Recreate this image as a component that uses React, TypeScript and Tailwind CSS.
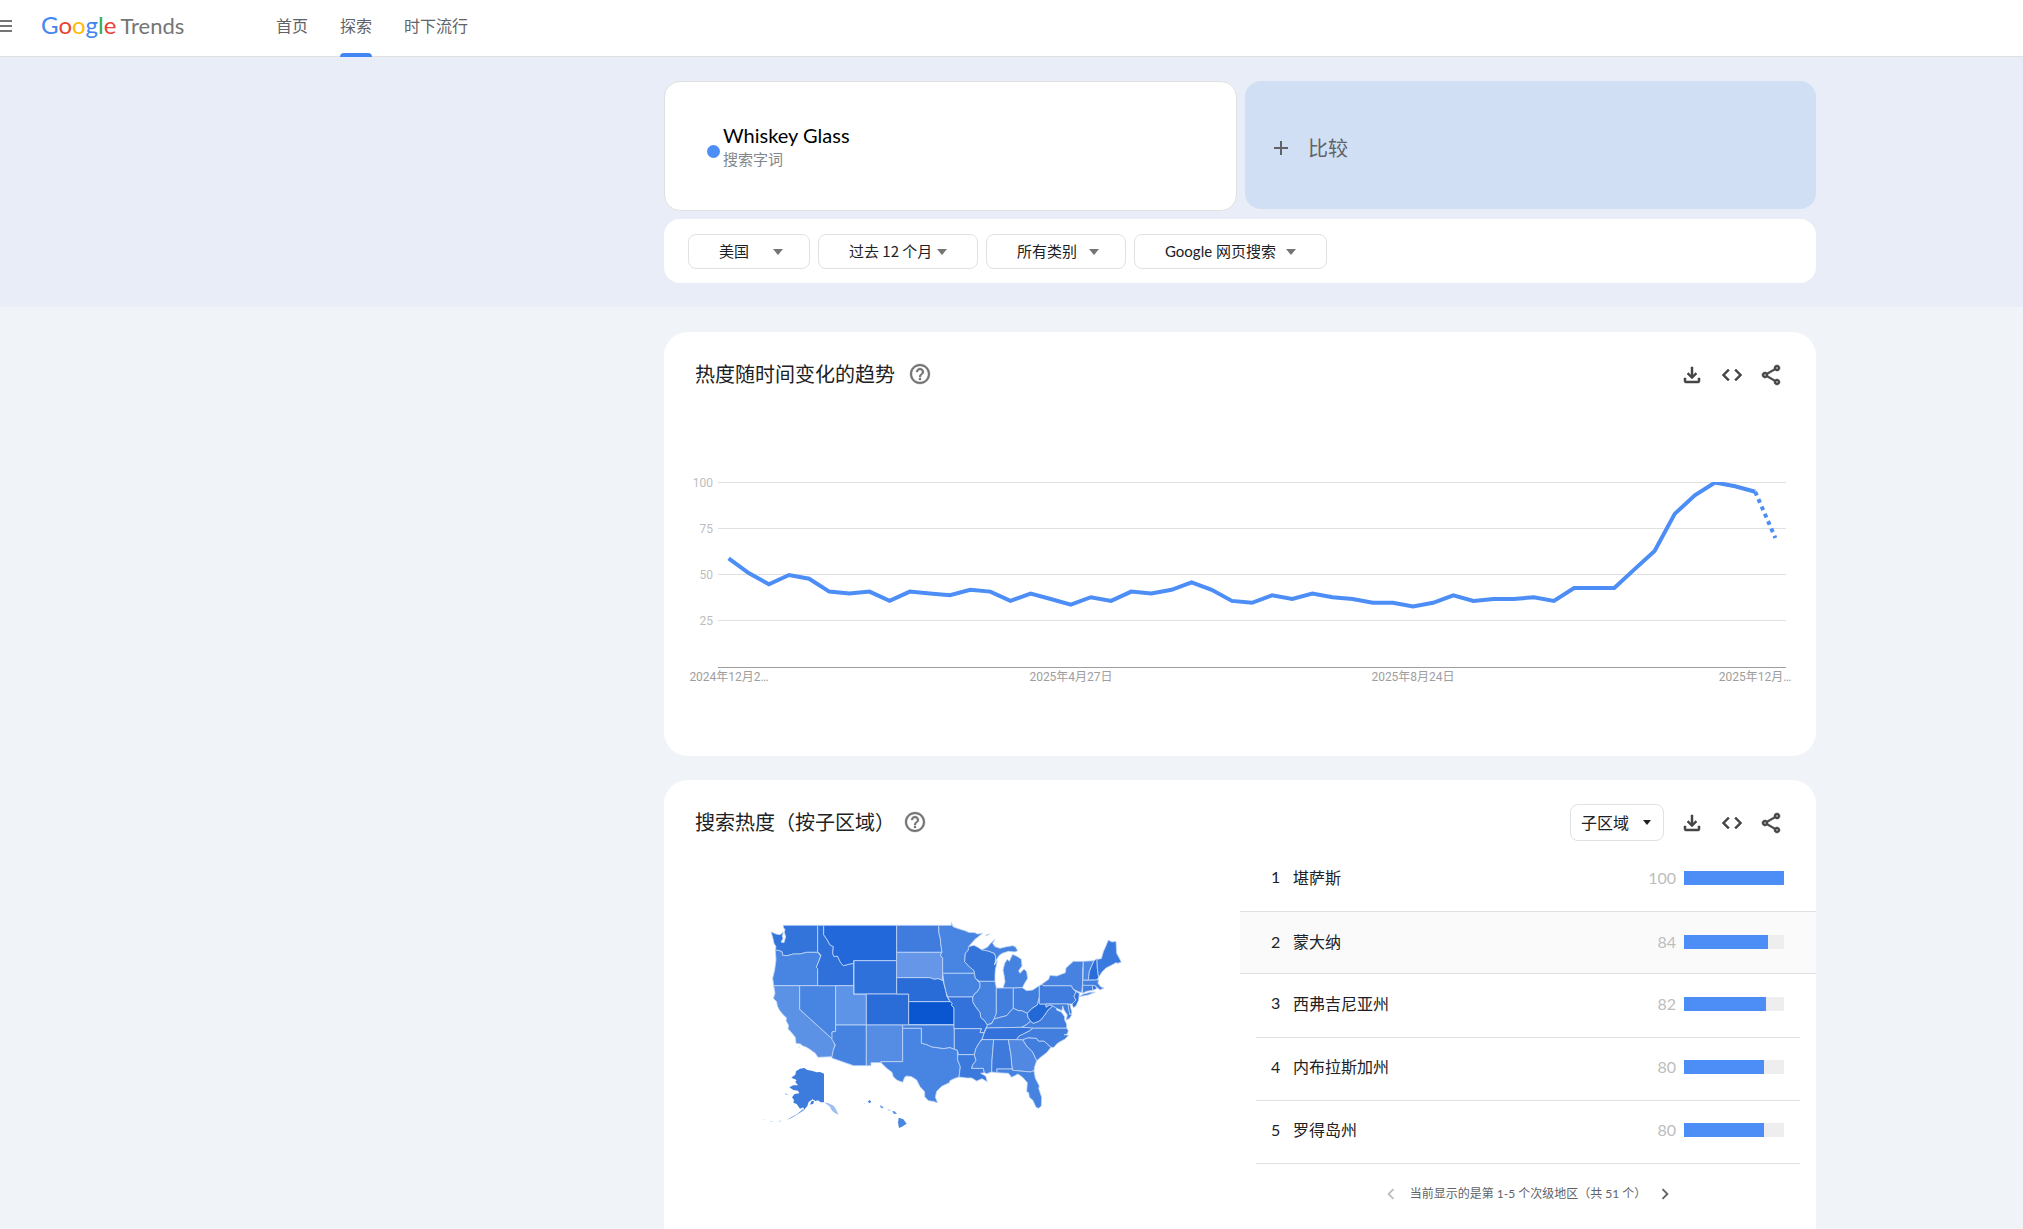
import React from "react";

const LATIN = "font-[Lato,'Noto_Sans_CJK_SC',sans-serif]";

type Shape = { id: string; fill: string; d: string };

const STATES: Shape[] = [
  { id: "WA", fill: "#3374da", d: "63,95 78,102 90,104 100,97 97,108 99,116 93,126 102,128 107,110 103,97 105,89 100,82 100,76 203,76 203,157 170,157 150,162 130,162 112,167 98,166 96,155 85,151 76,151 78,140 72,130 68,112" },
  { id: "OR", fill: "#4884e1", d: "76,151 85,151 96,155 98,166 112,167 130,162 150,162 170,157 203,157 212,168 206,185 199,202 203,206 203,257 71,257 68,235 74,210 78,180" },
  { id: "CA", fill: "#5c92e6", d: "71,257 149,257 149,328 248,418 255,435 250,450 247,470 204,472 196,460 178,447 166,440 158,438 152,432 138,430 136,412 128,402 114,386 116,376 108,362 110,354 100,345 88,330 82,318 80,305 70,295 75,280 73,268" },
  { id: "NV", fill: "#4884e1", d: "149,257 257,257 257,394 246,396 248,418 149,328" },
  { id: "ID", fill: "#2f70da", d: "203,76 221,76 221,104 232,120 240,135 250,140 248,160 252,170 262,168 272,188 280,197 300,192 311,190 311,257 203,257 203,206 199,202 206,185 213,166 203,155" },
  { id: "MT", fill: "#2268da", d: "221,76 440,76 440,182 311,182 311,190 300,192 280,197 272,188 262,168 252,170 248,160 250,140 240,135 232,120 221,104" },
  { id: "WY", fill: "#2f71da", d: "312,182 440,182 440,282 312,282" },
  { id: "UT", fill: "#5e94e7", d: "257,257 311,257 311,283 349,283 349,375 257,375" },
  { id: "CO", fill: "#2b6dd8", d: "349,282 476,282 476,375 349,375" },
  { id: "AZ", fill: "#4682e0", d: "257,375 349,375 349,497 311,497 245,474 250,450 256,435 246,418 246,396 257,394" },
  { id: "NM", fill: "#558de4", d: "349,375 458,375 458,485 393,485 396,488 363,488 363,497 349,497" },
  { id: "ND", fill: "#3f7cde", d: "440,76 566,76 567,100 571,115 572,130 576,157 440,157" },
  { id: "SD", fill: "#6696e8", d: "440,157 576,157 571,165 578,175 578,220 577,232 579,242 565,236 552,238 540,233 440,233" },
  { id: "NE", fill: "#296cd8", d: "440,233 540,233 552,238 565,236 579,242 584,260 588,275 590,288 600,305 476,305 476,282 440,282" },
  { id: "KS", fill: "#0a55d0", d: "476,305 601,305 607,310 604,315 612,324 612,374 476,374" },
  { id: "OK", fill: "#4480df", d: "458,375 612,375 613,402 613,448 600,443 580,446 560,443 545,441 530,434 514,430 514,385 458,385" },
  { id: "TX", fill: "#4884e1", d: "458,385 514,385 514,430 530,434 545,441 560,443 580,446 600,443 613,448 622,450 623,480 631,500 627,531 612,536 600,542 598,548 575,559 560,574 556,592 563,608 548,604 535,602 524,590 524,575 510,560 500,540 485,530 470,528 464,532 458,547 440,540 430,530 426,517 410,505 395,490 393,485 458,485" },
  { id: "MN", fill: "#4884e1", d: "566,76 604,76 604,67 609,80 625,86 648,93 655,97 675,98 682,102 698,100 675,118 658,137 655,150 646,160 644,185 658,200 672,212 674,220 578,220 578,175 571,165 576,157 572,130 571,115 567,100" },
  { id: "IA", fill: "#4682e0", d: "578,220 674,220 676,235 690,250 690,262 682,275 673,282 668,291 593,291 588,275 582,250" },
  { id: "WI", fill: "#3575da", d: "655,140 672,136 682,141 695,149 715,153 733,160 737,170 736,184 733,195 742,182 736,210 735,225 735,244 688,244 676,235 672,212 658,200 644,185 646,160 655,150" },
  { id: "MIU", fill: "#4682e0", d: "695,149 712,142 722,130 735,118 728,130 735,140 750,145 770,140 788,137 796,140 803,152 795,156 775,154 757,160 748,166 742,175 737,184 737,170 733,160 715,153" },
  { id: "MI", fill: "#4682e0", d: "759,264 765,245 762,225 759,210 764,190 772,178 778,184 782,175 788,163 803,170 814,178 816,198 806,212 810,220 822,207 830,215 833,235 825,248 817,263 790,264" },
  { id: "IL", fill: "#4682e0", d: "688,244 735,244 739,264 739,340 733,357 725,370 710,375 706,365 692,352 690,338 675,318 668,305 668,291 673,282 682,275 690,262 690,250" },
  { id: "IN", fill: "#427ede", d: "739,264 790,264 790,325 780,335 770,347 750,352 732,357 739,340" },
  { id: "OH", fill: "#427ede", d: "790,264 817,263 830,272 848,270 868,257 868,290 862,315 845,326 832,340 815,332 805,332 790,325" },
  { id: "KY", fill: "#427ede", d: "709,384 712,374 725,371 732,357 750,352 770,347 780,335 790,325 805,332 815,332 832,340 834,352 842,364 828,375 815,382" },
  { id: "TN", fill: "#3272da", d: "696,419 700,405 709,384 815,382 850,383 838,393 820,402 806,409 800,419" },
  { id: "MO", fill: "#3272da", d: "593,291 668,291 668,305 675,318 690,338 692,352 706,365 712,376 706,387 702,398 690,398 694,386 612,386 612,324 604,315 607,310 601,305" },
  { id: "AR", fill: "#3b79dc", d: "613,386 694,386 690,398 702,398 697,415 688,428 678,445 673,464 625,464 622,450 613,448" },
  { id: "LA", fill: "#3b79dc", d: "623,464 673,464 678,482 668,495 665,505 700,505 703,518 692,520 707,528 712,545 696,536 680,543 665,534 650,534 627,531 631,500 623,480" },
  { id: "MS", fill: "#4682e0", d: "696,419 731,419 726,480 725,516 710,521 703,518 700,505 665,505 668,495 678,482 673,464 678,445 688,428" },
  { id: "AL", fill: "#3d7adc", d: "731,419 775,419 783,465 785,490 787,507 740,507 742,518 725,516 726,480" },
  { id: "GA", fill: "#5088e2", d: "775,419 818,419 830,438 848,456 860,482 854,500 852,512 842,516 788,511 785,490 783,465" },
  { id: "FL", fill: "#4682e0", d: "740,507 787,507 788,511 842,516 852,512 856,535 868,558 866,565 875,592 874,618 866,625 858,622 848,600 838,592 836,578 830,575 832,548 818,532 804,522 785,532 775,520 742,518" },
  { id: "SC", fill: "#427ede", d: "818,419 834,413 860,415 865,423 882,423 903,442 890,458 874,470 860,482 848,456 830,438" },
  { id: "NC", fill: "#427ede", d: "800,419 806,409 820,402 838,393 850,384 950,384 955,392 952,402 942,404 956,406 944,418 930,425 920,432 912,442 903,442 882,423 865,423 860,415 834,413 818,419" },
  { id: "VA", fill: "#427ede", d: "815,382 828,375 842,364 850,370 866,364 874,358 884,345 894,330 908,318 920,320 920,330 934,336 944,350 944,360 950,372 950,384 850,384" },
  { id: "WV", fill: "#2268d6", d: "832,340 845,326 862,315 868,295 870,312 888,312 888,322 900,314 908,318 894,330 884,345 874,358 866,364 850,370 842,364 834,352" },
  { id: "PA", fill: "#3f7cdd", d: "868,258 876,252 880,257 964,257 970,268 978,275 972,290 978,300 966,312 868,312" },
  { id: "NY", fill: "#4882e1", d: "876,252 896,238 900,226 920,228 936,222 946,218 948,204 970,184 1000,184 998,215 998,250 995,278 985,275 970,268 964,257 880,257" },
  { id: "LI", fill: "#4882e1", d: "987,290 1000,282 1022,277 1036,276 1015,285" },
  { id: "NJ", fill: "#3272da", d: "970,268 978,275 988,280 986,300 978,318 970,323 966,312 978,300 972,290 978,275" },
  { id: "MD", fill: "#427ede", d: "888,312 954,312 960,343 966,344 958,356 948,360 952,345 942,330 938,318 936,332 920,325 908,318 900,314 888,320" },
  { id: "DE", fill: "#3272da", d: "954,312 960,314 966,340 959,343" },
  { id: "VT", fill: "#4a86e2", d: "1000,184 1032,182 1024,200 1018,215 1015,240 999,241" },
  { id: "NH", fill: "#2b6dd8", d: "1032,182 1041,176 1042,205 1046,232 1040,240 1015,240 1018,215 1024,200" },
  { id: "ME", fill: "#3a79de", d: "1041,178 1054,176 1060,155 1066,142 1075,120 1086,126 1098,124 1100,160 1114,186 1104,190 1098,188 1080,198 1068,204 1056,216 1046,232 1042,205" },
  { id: "MA", fill: "#4480df", d: "998,241 1040,240 1046,238 1044,250 1052,260 1062,264 1050,270 1036,258 998,256" },
  { id: "CT", fill: "#427ede", d: "998,256 1028,256 1028,271 1010,274 998,280" },
  { id: "RI", fill: "#2b6dd8", d: "1028,256 1036,257 1040,266 1028,271" },
];

const ISLANDS: Shape[] = [
  { id: "AK", fill: "#3d7bdc", d: "163,504 172,510 185,512 200,517 210,516 222,521 222,607 212,607 204,601 196,603 188,598 176,606 172,618 162,630 160,622 150,626 140,612 130,608 132,600 126,592 134,582 148,580 144,572 130,570 118,562 130,556 144,556 136,546 140,540 124,533 136,524 138,514 150,506" },
  { id: "AKP", fill: "#5c92e6", d: "162,630 150,638 138,646 124,654 110,660 126,650 142,642 158,628" },
  { id: "AKK", fill: "#3d7bdc", d: "184,604 192,602 190,611 180,614" },
  { id: "AKA", fill: "#9dbff1", d: "103,580 116,583 108,585" },
  { id: "AKS", fill: "#9dbff1", d: "222,607 236,610 252,618 260,632 266,644 256,640 246,632 240,620" },
  { id: "AL1", fill: "#b7cff4", d: "82,664 96,661 90,665" },
  { id: "AL2", fill: "#b7cff4", d: "58,662 70,666 62,666" },
  { id: "AL3", fill: "#b7cff4", d: "41,657 46,660 42,661" },
  { id: "HI1", fill: "#4a86e2", d: "353,605 359,600 364,605 359,610" },
  { id: "HI0", fill: "#b7cff4", d: "341,611 345,608 344,613" },
  { id: "HI2", fill: "#6c9cea", d: "389,616 396,618 402,625 393,624" },
  { id: "HI3", fill: "#9dbff1", d: "412,628 424,630 416,632" },
  { id: "HI4", fill: "#5c92e6", d: "426,634 434,634 441,641 432,642" },
  { id: "HI5", fill: "#4a86e2", d: "446,653 460,658 470,671 456,680 447,684 444,668" },
  { id: "CI", fill: "#b7cff4", d: "145,439 150,441 147,443" },
  { id: "IR", fill: "#9dbff1", d: "704,106 722,100 712,107" },
];

const SERIES = [
  59, 51, 45, 50, 48, 41, 40, 41, 36, 41, 40, 39, 42, 41, 36, 40, 37, 34, 38, 36, 41, 40, 42, 46, 42, 36, 35, 39, 37,
  40, 38, 37, 35, 35, 33, 35, 39, 36, 37, 37, 38, 36, 43, 43, 43, 53, 63, 83, 93, 100, 98, 95, 70,
];

const px = (i: number) => 44.6 + i * 20.13;
const py = (v: number) => 195.5 - v * 1.85;
const toPoints = (from: number, to: number) =>
  SERIES.slice(from, to)
    .map((v, i) => `${px(from + i).toFixed(1)},${py(v).toFixed(1)}`)
    .join(" ");

const PLAIN_ROW = "border-b border-[#e0e0e0] pb-1";

const REGIONS = [
  { rank: 1, name: "堪萨斯", value: 100, row: `h-16 ${PLAIN_ROW}` },
  { rank: 2, name: "蒙大纳", value: 84, row: "h-[61px] pb-px" },
  { rank: 3, name: "西弗吉尼亚州", value: 82, row: `h-16 ${PLAIN_ROW}` },
  { rank: 4, name: "内布拉斯加州", value: 80, row: `h-[63px] ${PLAIN_ROW}` },
  { rank: 5, name: "罗得岛州", value: 80, row: `h-[63px] ${PLAIN_ROW}` },
];

function Icon({ d, className = "size-6" }: { d: string; className?: string }) {
  return (
    <svg viewBox="0 0 24 24" className={className} fill="currentColor" aria-hidden="true">
      <path d={d} />
    </svg>
  );
}

const HELP =
  "M11 18h2v-2h-2v2zm1-16C6.48 2 2 6.48 2 12s4.48 10 10 10 10-4.48 10-10S17.52 2 12 2zm0 18c-4.41 0-8-3.59-8-8s3.59-8 8-8 8 3.59 8 8-3.59 8-8 8zm0-14c-2.21 0-4 1.79-4 4h2c0-1.1.9-2 2-2s2 .9 2 2c0 2-3 1.75-3 5h2c0-2.25 3-2.5 3-5 0-2.21-1.79-4-4-4z";
const DOWNLOAD =
  "M12 16l-5-5 1.4-1.45 2.6 2.6V4h2v8.15l2.6-2.6L17 11zM6 20c-.55 0-1.02-.2-1.41-.59C4.2 19.02 4 18.55 4 18v-3h2v3h12v-3h2v3c0 .55-.2 1.02-.59 1.41-.39.39-.86.59-1.41.59z";
const CODE =
  "M8 18l-6-6 6-6 1.43 1.43L4.83 12.03l4.58 4.57zm8 0l-1.43-1.43 4.6-4.6-4.58-4.57L16 6l6 6z";
const SHARE =
  "M17 22c-.83 0-1.54-.29-2.13-.88A2.89 2.89 0 0 1 14 19c0-.1.03-.33.08-.7l-7.03-4.1c-.26.25-.57.45-.92.59-.35.14-.73.21-1.13.21-.83 0-1.54-.29-2.13-.88A2.89 2.89 0 0 1 2 12c0-.83.29-1.54.87-2.13A2.89 2.89 0 0 1 5 9c.4 0 .78.07 1.13.21.35.14.66.34.92.59l7.03-4.1a1.84 1.84 0 0 1-.06-.34C14.01 5.25 14 5.13 14 5c0-.83.29-1.54.87-2.13A2.89 2.89 0 0 1 17 2c.83 0 1.54.29 2.13.87.58.59.87 1.3.87 2.13s-.29 1.54-.87 2.13A2.89 2.89 0 0 1 17 8c-.4 0-.78-.07-1.13-.21-.35-.14-.66-.34-.92-.59l-7.03 4.1c.03.12.06.23.06.34.01.11.02.23.02.36s-.01.25-.02.36c0 .11-.03.22-.06.34l7.03 4.1c.26-.25.57-.45.92-.59.35-.14.73-.21 1.13-.21.83 0 1.54.29 2.13.88.58.58.87 1.29.87 2.12s-.29 1.54-.87 2.12c-.59.59-1.3.88-2.13.88zm0-2a1 1 0 1 0 0-2 1 1 0 0 0 0 2zM5 13a1 1 0 1 0 0-2 1 1 0 0 0 0 2zm12-7a1 1 0 1 0 0-2 1 1 0 0 0 0 2z";

const BOLD_ICON = "size-6 stroke-current stroke-[0.5]";

function CardActions() {
  return (
    <div className="flex gap-4 pt-px text-[#444746]">
      <button type="button" aria-label="下载">
        <Icon d={DOWNLOAD} className={BOLD_ICON} />
      </button>
      <button type="button" aria-label="嵌入">
        <Icon d={CODE} className={BOLD_ICON} />
      </button>
      <button type="button" aria-label="分享">
        <Icon d={SHARE} className={BOLD_ICON} />
      </button>
    </div>
  );
}

function CardTitle({ children, gap }: { children: React.ReactNode; gap: string }) {
  return (
    <div className={`flex items-center pb-px ${gap}`}>
      <h2 className="text-xl leading-6 text-[#202124]">{children}</h2>
      <button type="button" aria-label="帮助" className="text-[#757575]">
        <Icon d={HELP} className="size-6 stroke-current stroke-[0.3]" />
      </button>
    </div>
  );
}

function Dropdown({ label, value, width, arrow, font = "" }: { label: string; value: string; width: string; arrow: string; font?: string }) {
  return (
    <div className={`relative ${width}`}>
      <select
        aria-label={label}
        className={`block h-[35px] w-full appearance-none rounded-lg border border-[#dfe1e5] bg-white pl-[30px] text-[15px] text-[#202124] ${font}`}
      >
        <option>{value}</option>
      </select>
      <span
        className={`pointer-events-none absolute top-[15px] border-x-[5px] border-t-[6px] border-x-transparent border-t-[#757575] ${arrow}`}
      />
    </div>
  );
}

function TrendChart() {
  return (
    <svg viewBox="0 0 1112 220" className="w-full font-[Roboto,'Noto_Sans_CJK_SC',sans-serif] text-xs" role="img" aria-label="热度随时间变化的趋势">
      {[100, 75, 50, 25].map((v) => (
        <g key={v}>
          <line x1="34" x2="1102" y1={Math.round(py(v)) - 0.5} y2={Math.round(py(v)) - 0.5} stroke="#e0e0e0" />
          <text x="29" y={Math.round(py(v)) + 4} textAnchor="end" fill="#bdbdbd">
            {v}
          </text>
        </g>
      ))}
      <line x1="34" x2="1102" y1="195.5" y2="195.5" stroke="#9e9e9e" />
      <clipPath id="plot">
        <rect x="34" y="10" width="1068" height="186" />
      </clipPath>
      <g clipPath="url(#plot)" fill="none" stroke="#4c8df6" strokeWidth="4">
        <polyline points={toPoints(0, 52)} />
        <polyline points={toPoints(51, 53)} strokeDasharray="4 4" />
      </g>
      <g fill="#9e9e9e" textAnchor="middle">
        <text x="45" y="209">2024年12月2…</text>
        <text x="387" y="209">2025年4月27日</text>
        <text x="729" y="209">2025年8月24日</text>
        <text x="1071" y="209">2025年12月…</text>
      </g>
    </svg>
  );
}

function UsMap() {
  return (
    <svg viewBox="0 0 1170 720" className="w-[390px]" role="img" aria-label="美国各州搜索热度">
      <g stroke="#c3d7f6" strokeWidth="2.4" strokeLinejoin="round">
        {STATES.map((s) => (
          <polygon key={s.id} points={s.d} fill={s.fill} />
        ))}
      </g>
      {ISLANDS.map((s) => (
        <polygon key={s.id} points={s.d} fill={s.fill} />
      ))}
    </svg>
  );
}

export default function App() {
  return (
    <div className="min-h-screen overflow-hidden bg-[#f0f4f9] font-['Noto_Sans_CJK_SC',sans-serif] text-[#202124]">
      <header className="box-content flex h-[51px] items-center border-b border-[#e0e0e0] bg-white pb-[5px]">
        <button type="button" aria-label="主菜单" className="-ml-[9px] text-[#757575]">
          <Icon d="M3 18h18v-2H3v2zm0-5h18v-2H3v2zm0-7v2h18V6H3z" />
        </button>
        <a href="#home" aria-label="Google Trends" className={`ml-[26px] flex w-[235px] items-baseline gap-1 pb-px ${LATIN}`}>
          <span className="text-2xl leading-8">
            <span className="text-[#4285f4]">G</span>
            <span className="text-[#ea4335]">o</span>
            <span className="text-[#fbbc04]">o</span>
            <span className="text-[#4285f4]">g</span>
            <span className="text-[#34a853]">l</span>
            <span className="text-[#ea4335]">e</span>
          </span>
          <span className="text-[22px] leading-8 text-[#757575]">Trends</span>
        </a>
        <nav className="flex gap-8 self-start text-base text-[#5f6368]">
          <a href="#home" className="flex h-[50px] items-center">首页</a>
          <a href="#explore" className="flex h-[57px] flex-col justify-between" aria-current="page">
            <span className="flex h-[50px] items-center">探索</span>
            <span className="h-1 rounded-t bg-[#4285f4]" />
          </a>
          <a href="#trending" className="flex h-[50px] items-center">时下流行</a>
        </nav>
      </header>

      <section className="bg-[#e8edf7] pb-6 pt-6 lg:pl-[457px]">
        <div className="mx-auto max-w-[1152px]">
          <div className="grid grid-cols-[573fr_571fr] gap-2">
            <div className="flex h-[130px] items-center rounded-2xl border border-[#e0e0e0] bg-white pl-[42px] pt-[2px]">
              <span className="mt-2 size-[13px] rounded-full bg-[#4c8df6]" />
              <div className="ml-[3px]">
                <div className={`text-xl leading-6 text-black ${LATIN}`}>Whiskey Glass</div>
                <div className="text-[15px] leading-6 text-[#80868b]">搜索字词</div>
              </div>
            </div>
            <button type="button" className="flex h-32 items-center gap-[15px] rounded-2xl bg-[#d0dff3] pl-6 pt-[5px] text-xl text-[#5f6368]">
              <Icon d="M19 13h-6v6h-2v-6H5v-2h6V5h2v6h6v2z" />
              比较
            </button>
          </div>
          <div className="mt-2 flex h-16 items-center gap-2 rounded-2xl bg-white px-6">
            <Dropdown label="地区" value="美国" width="w-[122px]" arrow="right-[27px]" />
            <Dropdown label="时间" value="过去 12 个月" width="w-40" arrow="right-[31px]" />
            <Dropdown label="类别" value="所有类别" width="w-[140px]" arrow="right-[27px]" />
            <Dropdown label="搜索类型" value="Google 网页搜索" width="w-[193px]" arrow="right-[31px]" font={LATIN} />
          </div>
        </div>
      </section>

      <main className="pt-[25px] lg:pl-[457px]">
        <div className="mx-auto flex max-w-[1152px] flex-col gap-6">
          <section className="rounded-3xl bg-white pb-16 pt-[30px]">
            <div className="flex items-center justify-between pl-[31px] pr-8">
              <CardTitle gap="gap-[13px]">热度随时间变化的趋势</CardTitle>
              <CardActions />
            </div>
            <div className="mt-[85px] px-5">
              <TrendChart />
            </div>
          </section>

          <section className="rounded-t-3xl bg-white pb-10 pt-6">
            <div className="flex items-center justify-between pl-[31px] pr-8">
              <CardTitle gap="gap-2">搜索热度（按子区域）</CardTitle>
              <div className="flex items-center gap-4">
                <div className="relative w-[94px]">
                  <select
                    aria-label="地区级别"
                    className="block h-[37px] w-full appearance-none rounded-lg border border-[#dfe1e5] bg-white pb-[2px] pl-[10px] text-base leading-6 text-[#202124]"
                  >
                    <option>子区域</option>
                  </select>
                  <span className="pointer-events-none absolute right-[13px] top-4 border-x-4 border-t-[5px] border-x-transparent border-t-[#202124]" />
                </div>
                <CardActions />
              </div>
            </div>
            <div className="grid grid-cols-2">
              <div className="flex items-start justify-center pr-[14px] pt-[59px]">
                <UsMap />
              </div>
              <div>
                <ol className="pt-[7px]">
                  {REGIONS.map((r) => (
                    <li key={r.rank} className={r.rank === 2 ? "-mt-px border-y border-[#e0e0e0] bg-[#fafafa] px-4" : "px-4"}>
                      <div className={`flex items-center text-base ${r.row}`}>
                        <span className={`w-9 pb-px pl-[15px] ${LATIN}`}>{r.rank}</span>
                        <a href="#region" className="ml-px flex-1 pb-[2px]">{r.name}</a>
                        <span className={`mr-2 text-[#bdbdbd] ${LATIN}`}>{r.value}</span>
                        <span className="mr-4 h-3.5 w-[100px] bg-[#eee]">
                          <span className="block h-full bg-[#4c8df6]" style={{ width: `${r.value}%` }} />
                        </span>
                      </div>
                    </li>
                  ))}
                </ol>
                <div className="flex items-center justify-center gap-2 pt-[19px] text-xs text-[#5f6368]">
                  <button type="button" aria-label="上一页" disabled className="text-[#bdbdbd]">
                    <Icon d="M15.41 7.41 14 6l-6 6 6 6 1.41-1.41L10.83 12z" className="size-[22px]" />
                  </button>
                  <span className={LATIN}>当前显示的是第 1-5 个次级地区（共 51 个）</span>
                  <button type="button" aria-label="下一页" className="text-[#616161]">
                    <Icon d="M10 6 8.59 7.41 13.17 12l-4.58 4.59L10 18l6-6z" className="size-[22px]" />
                  </button>
                </div>
              </div>
            </div>
          </section>
        </div>
      </main>
    </div>
  );
}
